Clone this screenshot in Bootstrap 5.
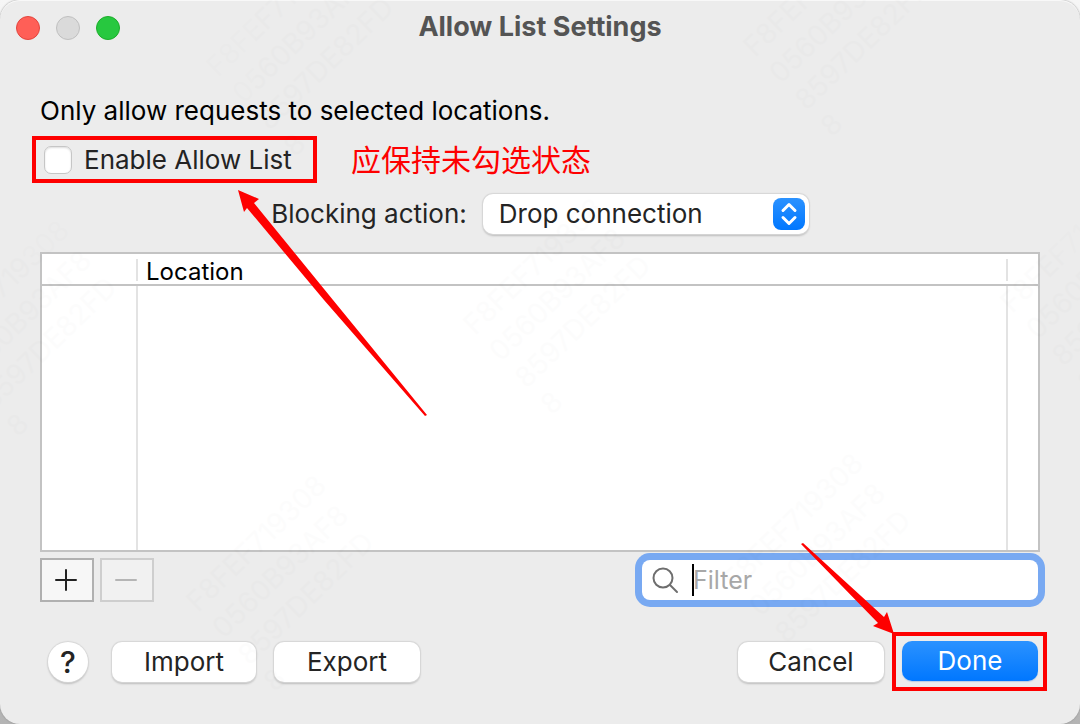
<!DOCTYPE html>
<html lang="en">
<head>
<meta charset="utf-8">
<meta name="viewport" content="width=device-width, initial-scale=1">
<title>Allow List Settings</title>
<link rel="stylesheet" href="https://cdn.jsdelivr.net/npm/bootstrap@5.3.0/dist/css/bootstrap.min.css">
<style>
  body { font-family: Inter, "Noto Sans CJK SC", sans-serif; font-size: 26px; line-height: 32px; color: #242424; background: linear-gradient(#f6f6f6, #b4b4b4); }
  .dialog-window { background: #ececec; border-radius: 20px; padding: 0 40px 33px; overflow: hidden; box-shadow: inset 0 1px 0 #f8f8f8, 0 0 2px #888; }
  .title-bar { display: grid; grid-template-columns: 1fr auto 1fr; height: 56px; margin: 0 -24px; }
  .title-bar h1 { font-size: 27px; line-height: 32px; padding-bottom: 2px; font-weight: 700; color: #545454; }
  .light { width: 24px; height: 24px; border-radius: 50%; padding: 0; border: 1px solid #e2463f; background: #ff5f57; }
  .light.off { background: #dadada; border-color: #bfbfbf; }
  .light.zoomer { background: #28c840; border-color: #1dad2b; }
  .intro { color: #000; margin-top: 39px; }
  .enable-row { margin-top: 9px; }
  .action-row { margin-top: 11px; }
  .callout-frame { border: 4px solid #fe0000; }
  .enable-frame { width: 285px; height: 47px; margin-left: -8px; padding-left: 8px; }
  .enable-frame .form-check-input { width: 28px; height: 28px; margin: 0; border: 1px solid #c6c6c6; border-radius: 7px; background-color: #fff; box-shadow: inset 0 1px 2px #ddd; }
  .note { color: #fe0000; font-family: "Noto Sans CJK SC", sans-serif; font-size: 30px; margin-left: 34px; }
  .arrow { position: absolute; pointer-events: none; z-index: 3; fill: #fe0000; }
  .arrow-enable { left: 198px; top: 50px; }
  .arrow-done { left: -95px; top: -93px; }
  .mac-select { width: 326px; }
  .mac-select select { appearance: none; height: 40px; padding: 0 48px 0 16px; border: 0; border-radius: 10px; background: #fff; color: #242424; box-shadow: 0 0 1px 1px #d6d6d6, 0 2px 2px #bbb; }
  .stepper { position: absolute; right: 4px; top: 4px; pointer-events: none; border-radius: 8px; background: linear-gradient(#2b92ff, #0077ff); }
  .location-table { margin-top: 18px; table-layout: fixed; background: #fff; border: 2px solid #c3c3c3; border-collapse: separate; border-spacing: 0; color: #000; }
  .location-table th { height: 32px; padding: 5px 0 3px; border-bottom: 2px solid #c3c3c3; font-size: 24px; line-height: 22px; font-weight: 400; }
  .location-table th span { display: block; height: 22px; border-right: 2px solid #e3e3e3; }
  .location-table td { height: 264px; border-right: 2px solid #e3e3e3; }
  .location-table td:last-child { border-right: 0; }
  .location-table .label-cell { padding-left: 8px; line-height: 26px; }
  .w-flag { width: 96px; }
  .w-end { width: 30px; }
  .table-tools { margin-top: 6px; }
  .tool-pair { gap: 6px; }
  .square-btn { width: 54px; height: 44px; padding: 0; border: 2px solid #b0b0b0; border-radius: 0; background: #f7f7f7; }
  .square-btn:disabled { opacity: 1; background: #f1f1f1; border-color: #cecece; }
  .filter-box { width: 396px; margin-right: 2px; }
  .filter-box .form-control { height: 40px; padding: 0 12px 0 51px; border: 0; border-radius: 8px; font-size: 25px; color: #242424; box-shadow: 0 0 0 7px #78a9f2; }
  .filter-box .form-control::placeholder { color: #a8a8a8; opacity: 1; }
  .glass { position: absolute; left: 10px; top: 7px; }
  .caret { position: absolute; left: 50px; top: 4px; width: 2px; height: 32px; background: #000; }
  .actions { margin-top: 30px; }
  .mac-btn { width: 146px; height: 40px; padding: 0; font-size: 26px; line-height: 32px; border: 0; border-radius: 10px; background: #fff; color: #242424; box-shadow: 0 0 1px 1px #d6d6d6, 0 2px 2px #bbb; }
  .help-btn { width: 40px; border-radius: 50%; font-size: 30px; font-weight: 500; }
  .import-btn { width: 144px; margin-right: 18px; }
  .done-btn { width: 136px; background: linear-gradient(#2b92ff, #0077ff); color: #fff; box-shadow: 0 1px 1px #b9cce4; }
  .done-frame { padding: 5px 5px 6px 6px; margin-right: -7px; }
  .stamp { position: absolute; left: 0; top: 0; pointer-events: none; z-index: 2; fill: #000; opacity: .006; font-size: 28px; }
</style>
</head>
<body>
<main class="dialog-window position-relative min-vh-100">
  <header class="title-bar align-items-center">
    <div class="d-flex gap-3">
      <button class="light" type="button" aria-label="Close"></button>
      <button class="light off" type="button" aria-label="Minimize" disabled></button>
      <button class="light zoomer" type="button" aria-label="Zoom"></button>
    </div>
    <h1 class="mb-0">Allow List Settings</h1>
  </header>

  <p class="intro mb-0">Only allow requests to selected locations.</p>

  <div class="enable-row d-flex align-items-center position-relative">
    <div class="callout-frame enable-frame d-flex align-items-center">
      <input class="form-check-input" type="checkbox" id="enable">
      <label class="ps-2 ms-1" for="enable">Enable Allow List</label>
    </div>
    <span class="note mb-1" lang="zh">应保持未勾选状态</span>
    <svg class="arrow arrow-enable" width="192" height="230" viewBox="0 0 192 230" aria-hidden="true"><path d="M0 4 21 13 16 17 95 114 189 229 187 230 86 114 9 22 6 26Z"/></svg>
  </div>

  <div class="action-row d-flex justify-content-center align-items-center gap-3">
    <label for="action">Blocking action:</label>
    <div class="mac-select position-relative">
      <select class="w-100 d-block" id="action"><option>Drop connection</option></select>
      <svg class="stepper" width="32" height="32" viewBox="0 0 32 32" fill="none" stroke="#fff" stroke-width="3" stroke-linecap="round" stroke-linejoin="round" aria-hidden="true"><path d="M10 12.500 16 6.500l6 6M10 19.500l6 6 6-6"/></svg>
    </div>
  </div>

  <table class="location-table w-100">
    <colgroup><col class="w-flag"><col><col class="w-end"></colgroup>
    <thead><tr><th><span></span></th><th><span class="label-cell">Location</span></th><th></th></tr></thead>
    <tbody><tr><td></td><td></td><td></td></tr></tbody>
  </table>

  <div class="table-tools d-flex justify-content-between align-items-center">
    <div class="tool-pair d-flex">
      <button class="square-btn" type="button" aria-label="Add"><svg class="d-block mx-auto" width="24" height="24" viewBox="0 0 24 24" stroke="#222" stroke-width="2" stroke-linecap="round" aria-hidden="true"><path d="M1 12H21M11 2V22"/></svg></button>
      <button class="square-btn" type="button" aria-label="Remove" disabled><svg class="d-block mx-auto" width="24" height="24" viewBox="0 0 24 24" stroke="#b5b5b5" stroke-width="2" stroke-linecap="round" aria-hidden="true"><path d="M1 12H21"/></svg></button>
    </div>
    <div class="filter-box position-relative">
      <input class="form-control" type="text" placeholder="Filter" aria-label="Filter">
      <svg class="glass" width="28" height="28" viewBox="0 0 28 28" fill="none" stroke="#6e6e6e" stroke-width="2" stroke-linecap="round" aria-hidden="true"><circle cx="11" cy="11" r="9.500"/><path d="m18 18 7 7"/></svg>
      <span class="caret"></span>
    </div>
  </div>

  <footer class="actions d-flex align-items-center">
    <button class="mac-btn help-btn ms-2 me-4" type="button">?</button>
    <button class="mac-btn import-btn" type="button">Import</button>
    <button class="mac-btn" type="button">Export</button>
    <button class="mac-btn ms-auto me-2" type="button">Cancel</button>
    <div class="callout-frame done-frame position-relative">
      <button class="mac-btn done-btn d-block" type="button">Done</button>
      <svg class="arrow arrow-done" width="94" height="92" viewBox="0 0 94 92" aria-hidden="true"><path d="M0 1 2 0 83 74 86 69 93 91 72 83 77 80Z"/></svg>
    </div>
  </footer>

  <svg class="stamp w-100 h-100" aria-hidden="true">
    <defs>
      <g id="stamp"><g transform="rotate(-44)"><text>F8FEF719308</text><text y="37">0560B93AF8</text><text y="74">8597DE82FD</text><text y="111">8</text></g></g>
    </defs>
    <use href="#stamp" x="218" y="78"/><use href="#stamp" x="755" y="58"/>
    <use href="#stamp" x="-59" y="358"/><use href="#stamp" x="475" y="336"/><use href="#stamp" x="1012" y="314"/>
    <use href="#stamp" x="198" y="613"/><use href="#stamp" x="735" y="591"/>
  </svg>
</main>
<script src="https://cdn.jsdelivr.net/npm/bootstrap@5.3.0/dist/js/bootstrap.bundle.min.js"></script>
</body>
</html>
